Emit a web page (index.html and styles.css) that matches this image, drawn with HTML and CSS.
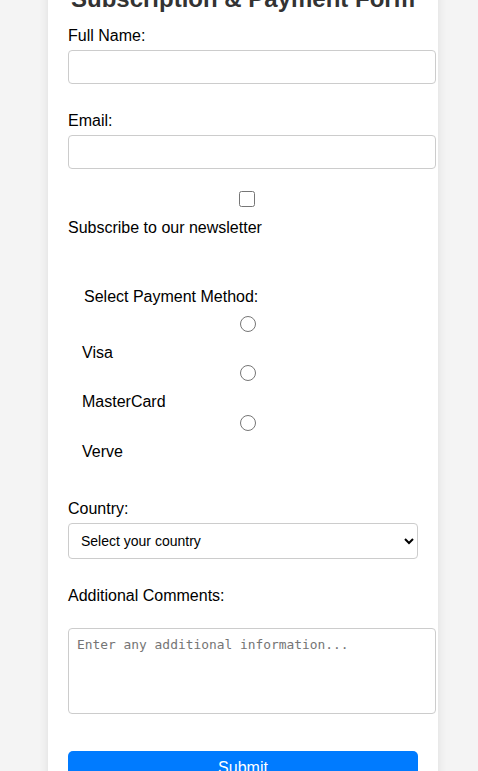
FILE: index.html
```html
<!DOCTYPE html>
<html lang="en">
<head>
<meta charset="utf-8">
<title>Subscription &amp; Payment Form</title>
<link rel="stylesheet" href="styles.css">
</head>
<body>
<div class="container">
  <h2 class="title">Subscription &amp; Payment Form</h2>
  <form class="form">
    <div class="group">
      <label class="label" for="name">Full Name:</label>
      <input class="field" type="text" id="name">
    </div>
    <div class="group">
      <label class="label" for="email">Email:</label>
      <input class="field" type="email" id="email">
    </div>
    <div class="check-group">
      <div class="check-row"><input class="check" type="checkbox" id="subscribe"></div>
      <label class="label" for="subscribe">Subscribe to our newsletter</label>
    </div>
    <fieldset class="payment">
      <legend class="legend">Select Payment Method:</legend>
      <div class="option">
        <div class="radio-row"><input class="radio" type="radio" name="pay" id="visa"></div>
        <label class="label" for="visa">Visa</label>
      </div>
      <div class="option">
        <div class="radio-row"><input class="radio" type="radio" name="pay" id="mc"></div>
        <label class="label" for="mc">MasterCard</label>
      </div>
      <div class="option">
        <div class="radio-row"><input class="radio" type="radio" name="pay" id="verve"></div>
        <label class="label" for="verve">Verve</label>
      </div>
    </fieldset>
    <div class="group">
      <label class="label" for="country">Country:</label>
      <select class="select" id="country">
        <option>Select your country</option>
        <option>Nigeria</option>
        <option>Ghana</option>
        <option>Kenya</option>
      </select>
    </div>
    <div class="group group-last">
      <label class="label label-comments" for="comments">Additional Comments:</label>
      <textarea class="textarea" id="comments" placeholder="Enter any additional information..."></textarea>
    </div>
    <button class="submit" type="submit">Submit</button>
  </form>
</div>
</body>
</html>
```

FILE: styles.css
```css
html, body {
  height: 100%;
}

body {
  margin: 0;
  padding-left: 8px;
  height: 100vh;
  box-sizing: border-box;
  background: #f4f4f4;
  font-family: "Liberation Sans", Arial, sans-serif;
  display: flex;
  justify-content: center;
  align-items: center;
  overflow: hidden;
}

.container {
  width: 350px;
  flex-shrink: 0;
  background: #fff;
  padding: 20px;
  border-radius: 8px;
  box-shadow: 0 0 10px rgba(0, 0, 0, 0.1);
}

.title {
  margin: 0 0 13.5px;
  font-size: 24px;
  font-weight: bold;
  color: #333;
  text-align: center;
}

.form {
  margin: 0;
}

.group {
  margin-bottom: 28px;
}

.label {
  display: block;
  font-size: 16px;
  color: #000;
  margin-bottom: 5px;
}

.field {
  display: block;
  box-sizing: border-box;
  width: calc(100% + 18px);
  height: 34px;
  padding: 8px;
  border: 1px solid #ccc;
  border-radius: 4px;
  margin: 0;
  font-size: 13.33px;
  background: #fff;
}

.check-group {
  margin-top: -6px;
}

.check-row {
  display: flex;
  justify-content: center;
  padding-left: 8px;
}

.check {
  width: 16px;
  height: 16px;
  margin: 0 0 12px;
}

.check-group .label {
  margin-bottom: 0;
}

.payment {
  border: none;
  margin: 51px 2px 0;
  padding: 0 12px 39px;
}

.legend {
  padding: 0 2px;
  font-size: 16px;
  color: #000;
  line-height: normal;
}

.option {
  padding-top: 10px;
}

.option + .option {
  padding-top: 3.6px;
}

.radio-row {
  display: flex;
  justify-content: center;
  padding-left: 10px;
}

.radio {
  width: 16px;
  height: 16px;
  margin: 0 0 12px;
}

.option .label {
  margin-bottom: 0;
}

.select {
  display: block;
  width: 100%;
  height: 36px;
  box-sizing: border-box;
  padding: 8px;
  border: 1px solid #ccc;
  border-radius: 4px;
  margin: 0;
  font-family: "Liberation Sans", Arial, sans-serif;
  font-size: 14px;
  color: #000;
  background: #fff;
}

.label-comments {
  margin-bottom: 23px;
}

.textarea {
  display: block;
  box-sizing: border-box;
  width: calc(100% + 18px);
  height: 86px;
  padding: 8px;
  border: 1px solid #ccc;
  border-radius: 4px;
  margin: 0;
  font-family: "DejaVu Sans Mono", monospace;
  font-size: 12.9px;
  resize: none;
}

.textarea::placeholder {
  color: #757575;
}

.group-last {
  margin-bottom: 37px;
}

.submit {
  display: block;
  width: 100%;
  height: 35px;
  padding: 0;
  border: none;
  border-radius: 5px;
  background: #007bff;
  color: #fff;
  font-family: "Liberation Sans", Arial, sans-serif;
  font-size: 16px;
  cursor: pointer;
}
```
